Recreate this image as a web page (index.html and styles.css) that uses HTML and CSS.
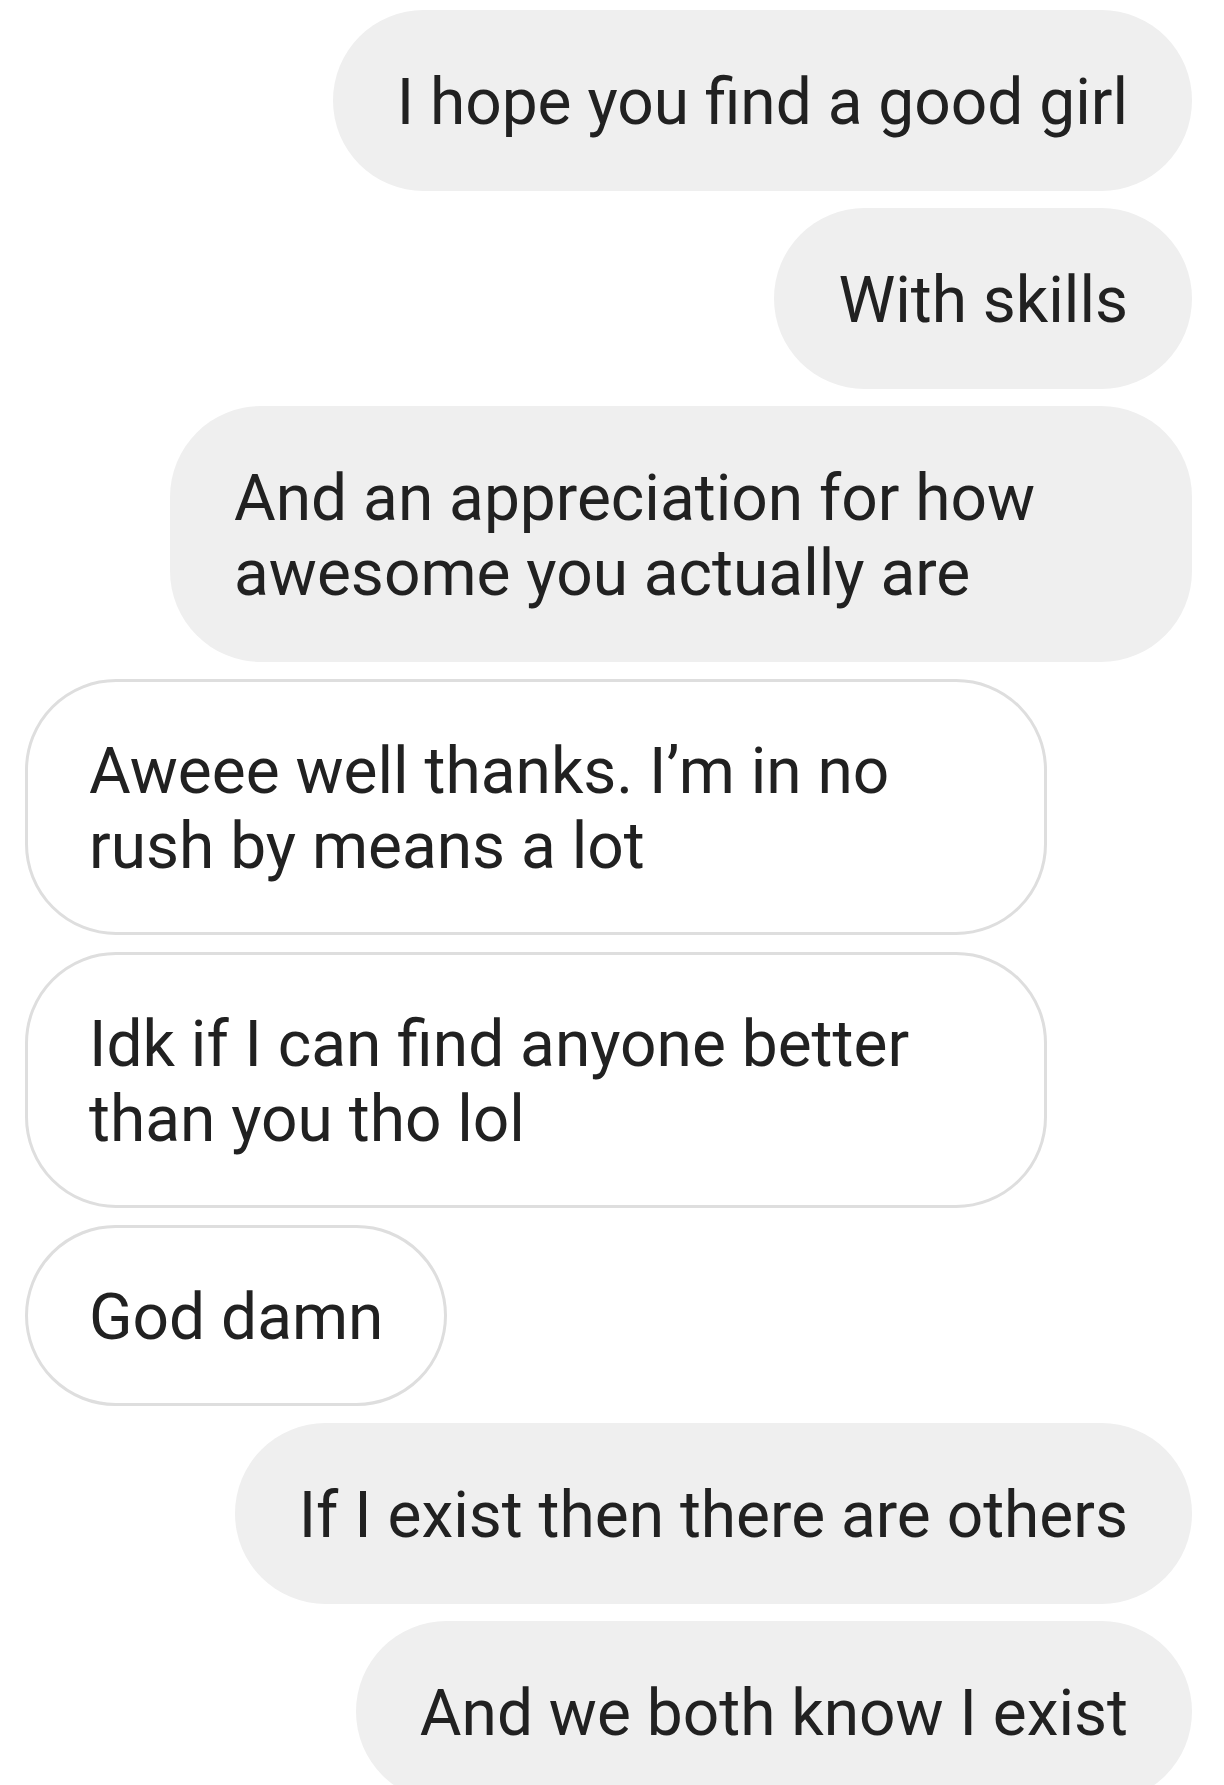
FILE: index.html
```html
<!DOCTYPE html>
<html lang="en">

<head>
    <meta charset="UTF-8">
    <meta name="viewport" content="width=device-width, initial-scale=1.0">
    <title>Messages</title>
    <link rel="stylesheet" href="styles.css">
</head>

<body>

    <div class="thread">
        <div class="msg sent">I hope you find a good girl</div>
        <div class="msg sent">With skills</div>
        <div class="msg sent">And an appreciation for how awesome you actually are</div>
        <div class="msg received">Aweee well thanks. I’m in no rush by means a lot</div>
        <div class="msg received">Idk if I can find anyone better than you tho lol</div>
        <div class="msg received">God damn</div>
        <div class="msg sent">If I exist then there are others</div>
        <div class="msg sent">And we both know I exist</div>
    </div>

</body>

</html>
```

FILE: styles.css
```css
body {
    margin: 0;
    background: #fff;
    font-family: Roboto, "Noto Sans", sans-serif;
    color: #212121;
}

.thread {
    display: flex;
    flex-direction: column;
    gap: 17px;
    padding: 10px 32px 0 25px;
}

.msg {
    box-sizing: border-box;
    max-width: 1022px;
    padding: 55px 64px 51px;
    border-radius: 91px;
    font-size: 64px;
    line-height: 75px;
}

.sent {
    align-self: flex-end;
    background: #efefef;
}

.received {
    align-self: flex-start;
    background: #fff;
    border: 3px solid #dedede;
    padding: 52px 61px 48px;
}
```
